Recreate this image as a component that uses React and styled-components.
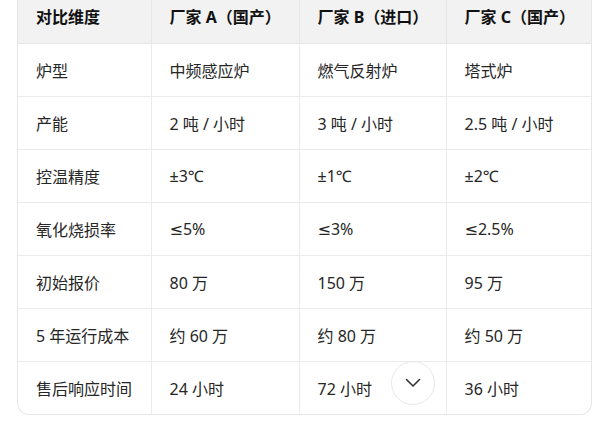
import React from 'react'
import styled, { createGlobalStyle } from 'styled-components'

const GlobalStyle = createGlobalStyle`
  html, body {
    margin: 0;
    padding: 0;
    background: #ffffff;
    overflow: hidden;
  }
  body {
    font-family: "Noto Sans", "DejaVu Sans", "Noto Sans CJK SC", sans-serif;
    color: #222;
  }
`

const StPage = styled.div`
  position: relative;
  width: 615px;
  height: 421px;
  overflow: hidden;
`

const StTableWrap = styled.div`
  margin: -10px 23px 0 17px;
  border: 1px solid #e6e6e6;
  border-top: none;
  border-radius: 0 0 12px 12px;
  overflow: hidden;
`

const StTable = styled.table`
  width: 100%;
  border-collapse: collapse;
  table-layout: fixed;
  font-size: 16px;
`

const StHeadCell = styled.th`
  height: 53px;
  padding: 0 18px;
  text-align: left;
  font-weight: 700;
  color: #111;
  background: #f2f2f2;
  border-bottom: 1px solid #e6e6e6;
  border-right: 1px solid #e6e6e6;
  box-sizing: border-box;
  width: ${p => p.$w}px;
  &:last-child { border-right: none; }
`

const StCell = styled.td`
  height: 53px;
  padding: 0 18px;
  color: #262626;
  border-bottom: 1px solid #ebebeb;
  border-right: 1px solid #ebebeb;
  box-sizing: border-box;
  &:last-child { border-right: none; }
  tr:last-child > & { border-bottom: none; }
`

const StScrollButton = styled.button`
  position: absolute;
  left: 391px;
  top: 361px;
  width: 44px;
  height: 44px;
  border-radius: 50%;
  border: 1px solid #e8e8e8;
  background: #ffffff;
  display: flex;
  align-items: center;
  justify-content: center;
  padding: 0;
  cursor: pointer;
`

const columns = [
  { title: '对比维度', w: 133 },
  { title: '厂家 A（国产）', w: 148 },
  { title: '厂家 B（进口）', w: 147 },
  { title: '厂家 C（国产）', w: 147 },
]

const rows = [
  ['炉型', '中频感应炉', '燃气反射炉', '塔式炉'],
  ['产能', '2 吨 / 小时', '3 吨 / 小时', '2.5 吨 / 小时'],
  ['控温精度', '±3℃', '±1℃', '±2℃'],
  ['氧化烧损率', '≤5%', '≤3%', '≤2.5%'],
  ['初始报价', '80 万', '150 万', '95 万'],
  ['5 年运行成本', '约 60 万', '约 80 万', '约 50 万'],
  ['售后响应时间', '24 小时', '72 小时', '36 小时'],
]

const ChevronDown = () => (
  <svg width="16" height="10" viewBox="0 0 16 10" fill="none">
    <path d="M1.5 1.5L8 8L14.5 1.5" stroke="#333" strokeWidth="1.6" strokeLinecap="round" strokeLinejoin="round" />
  </svg>
)

const App = () => {
  return (
    <StPage>
      <GlobalStyle />
      <StTableWrap>
        <StTable>
          <thead>
            <tr>
              {columns.map(c => (
                <StHeadCell key={c.title} $w={c.w}>{c.title}</StHeadCell>
              ))}
            </tr>
          </thead>
          <tbody>
            {rows.map(r => (
              <tr key={r[0]}>
                {r.map((v, i) => (
                  <StCell key={i}>{v}</StCell>
                ))}
              </tr>
            ))}
          </tbody>
        </StTable>
      </StTableWrap>
      <StScrollButton aria-label="scroll down">
        <ChevronDown />
      </StScrollButton>
    </StPage>
  )
}

export default App
